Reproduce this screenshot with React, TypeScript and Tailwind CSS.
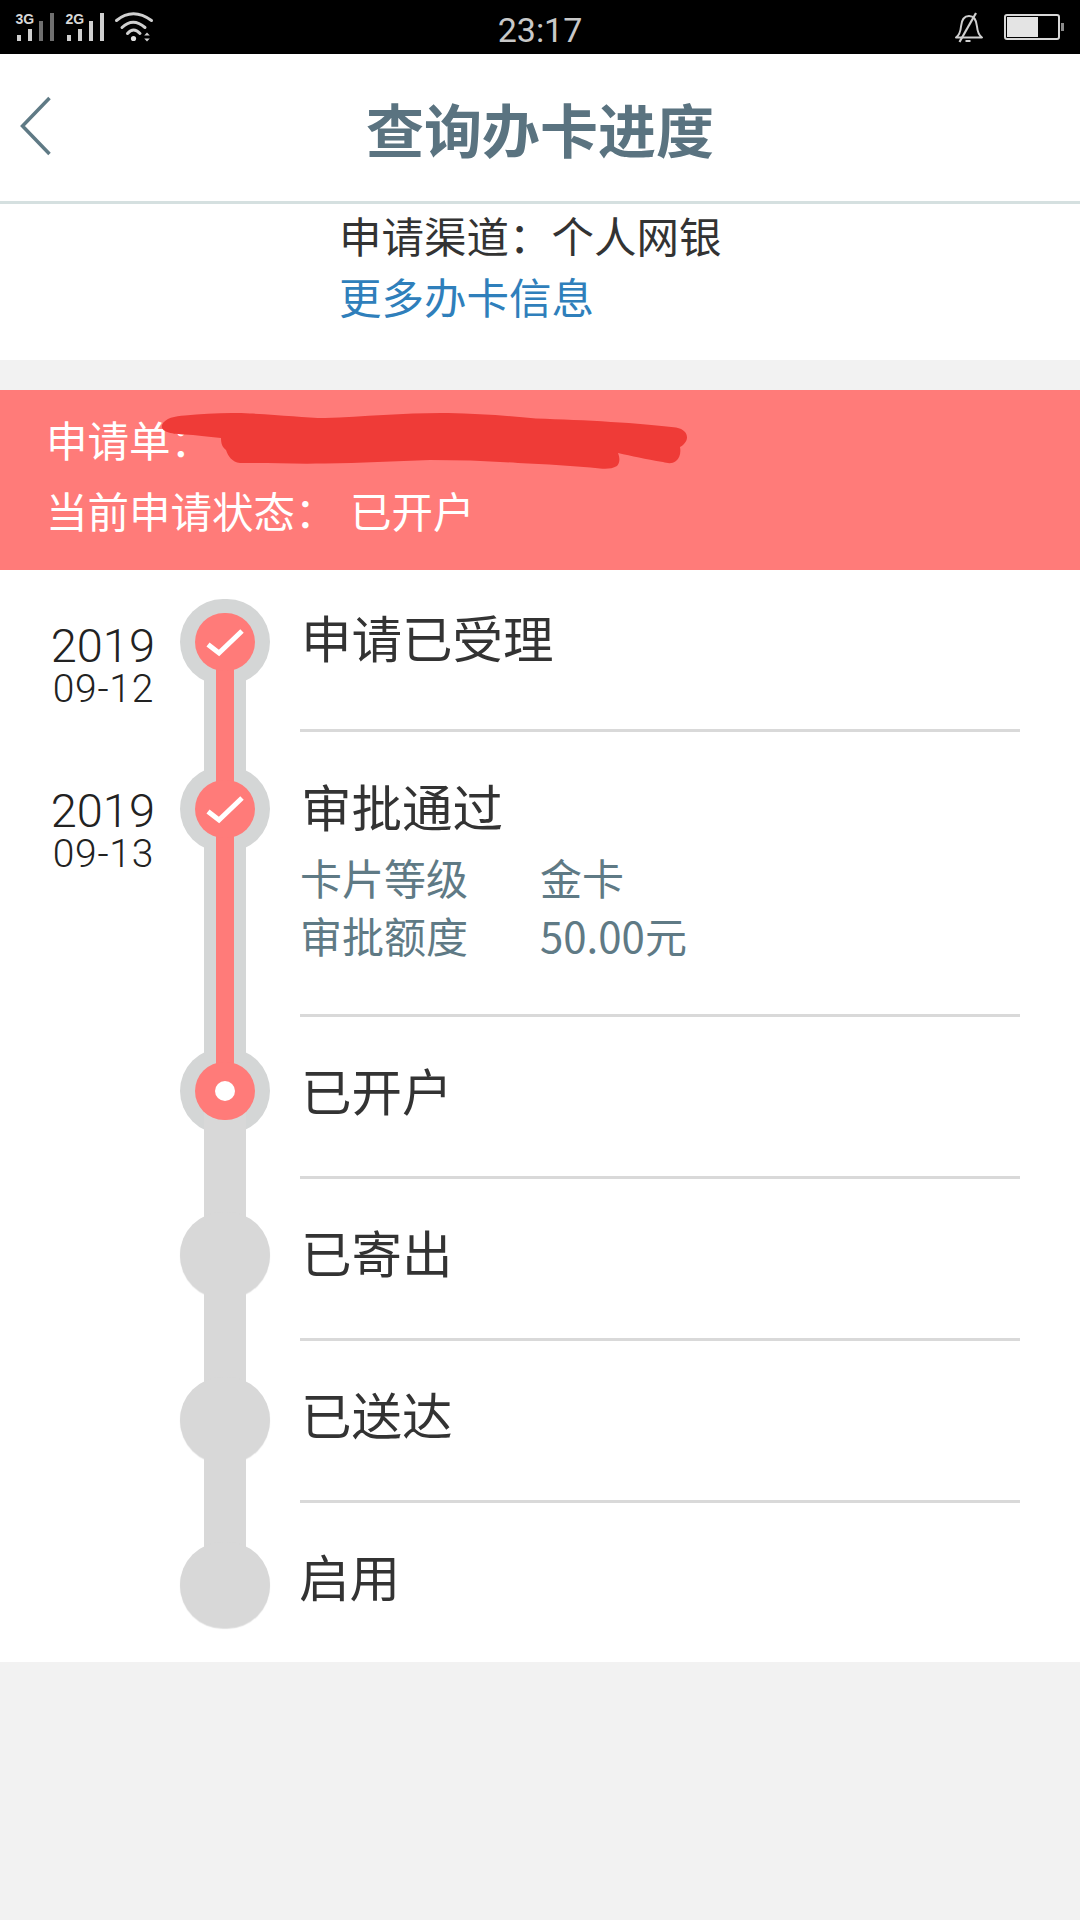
import React from "react";

const FONT = "font-['Noto_Sans_CJK_SC',sans-serif]";
const NUM = "font-['Roboto','Noto_Sans_CJK_SC',sans-serif]";

function StatusLeft() {
  const bar = "#cfcfcf";
  const dim = "#6f6f6f";
  return (
    <svg width="170" height="54" viewBox="0 0 170 54" fill="none">
      <text x="15.500" y="23.500" fontSize="14" fontWeight="700" fill="#d8d8d8" fontFamily="Liberation Sans">3G</text>
      <rect x="17" y="35" width="4" height="6" fill={bar} />
      <rect x="28" y="29" width="4" height="12" fill={bar} />
      <rect x="39" y="21" width="4" height="20" fill={dim} />
      <rect x="50" y="13" width="4" height="28" fill={dim} />
      <text x="65.500" y="23.500" fontSize="14" fontWeight="700" fill="#d8d8d8" fontFamily="Liberation Sans">2G</text>
      <rect x="67" y="35" width="4" height="6" fill={bar} />
      <rect x="78" y="29" width="4" height="12" fill={bar} />
      <rect x="89" y="21" width="4" height="20" fill={bar} />
      <rect x="100" y="13" width="4" height="28" fill={bar} />
      <g stroke="#d0d0d0" strokeWidth="3" strokeLinecap="round">
        <path d="M116.500 20.500Q133 7 151.500 20.500" />
        <path d="M122 27.500Q133 17 145 27.500" />
        <path d="M127.500 33.500Q133.500 26.500 140 33.500" />
      </g>
      <circle cx="133.500" cy="38.500" r="2.600" fill="#e0e0e0" />
      <path d="M147 32.500l2.800 3h-5.600zM147 41.500l2.800-3h-5.600z" fill="#d0d0d0" />
    </svg>
  );
}

function StatusRight() {
  return (
    <svg width="125" height="54" viewBox="955 0 125 54" fill="none">
      <path
        d="M956 37.500c3.500-2.500 4.500-5.500 5-11 .6-6.500 3.500-10.500 8-10.500s7.400 4 8 10.500c.5 5.500 1.500 8.500 5 11z"
        stroke="#d0d0d0"
        strokeWidth="2"
        strokeLinejoin="round"
      />
      <path d="M976 13L959.500 42" stroke="#d0d0d0" strokeWidth="2.200" />
      <rect x="965.500" y="40" width="5" height="2" fill="#d0d0d0" />
      <rect x="1005" y="15" width="54" height="24" rx="2" stroke="#d8d8d8" strokeWidth="2" />
      <rect x="1007" y="17" width="31" height="20" fill="#e4e4e4" />
      <rect x="1061" y="23" width="3" height="8" fill="#8a8a8a" />
    </svg>
  );
}

function Scribble() {
  return (
    <svg
      className="absolute left-[155px] top-[17px]"
      width="540"
      height="64"
      viewBox="155 407 540 64"
      fill="none"
    >
      <path
        d="M162 425C165 418 175 416 185 415.500C205 413.500 228 412.500 250 413.500C280 414.500 305 418 325 418C365 416.500 410 412.500 448 413C480 413.500 510 416 536 418.500C585 420 640 423 676 427.500C684 429 687 433 687 437.500C687 441 684 445 680 447C681 452 680 458 676 461C672 464 668 463.500 663 462C645 459 632 456 618 453C620 458 620 463 617 466C612 469 606 469 600 468.500C575 466 545 464 518 463C490 461 460 460 430 460C395 461 360 463 325 463.500C295 464 265 463 240 463C232 462 228 456 226 450C222 447 221 443 221 438C208 437 195 435 185 434.500C172 434 160 432 162 425Z"
        fill="#ef3b37"
      />
    </svg>
  );
}

function Check() {
  return (
    <svg width="60" height="58" viewBox="0 0 60 58" fill="none">
      <path d="M13 31.500L24 40L47 18" stroke="#ffffff" strokeWidth="5" />
    </svg>
  );
}

type Step = {
  label: string;
  state: "done" | "current" | "todo";
  rowClass: string;
  textPad: string;
  nodePad: string;
  track?: string;
  redTrack?: string;
  date?: [string, string];
  datePad?: string;
  border?: boolean;
  labelInset?: string;
  details?: [string, string][];
};

const steps: Step[] = [
  {
    label: "申请已受理",
    state: "done",
    rowClass: "h-[162px]",
    textPad: "pt-[36px]",
    nodePad: "pt-[29px]",
    track: "top-[72px] h-[167px] bg-[#d4d6d6]",
    redTrack: "top-[72px] h-[167px]",
    date: ["2019", "09-12"],
    datePad: "pt-[54px]",
    border: true,
  },
  {
    label: "审批通过",
    state: "done",
    rowClass: "h-[285px]",
    textPad: "pt-[43px]",
    nodePad: "pt-[34px]",
    track: "top-[77px] h-[282px] bg-[#d4d6d6]",
    redTrack: "top-[77px] h-[282px]",
    date: ["2019", "09-13"],
    datePad: "pt-[57px]",
    border: true,
    details: [
      ["卡片等级", "金卡"],
      ["审批额度", "50.00元"],
    ],
  },
  {
    label: "已开户",
    state: "current",
    rowClass: "h-[162px]",
    textPad: "pt-[42px]",
    nodePad: "pt-[31px]",
    track: "top-[74px] h-[164px] bg-[#d8d8d8]",
    border: true,
  },
  {
    label: "已寄出",
    state: "todo",
    rowClass: "h-[162px]",
    textPad: "pt-[42px]",
    nodePad: "pt-[33px]",
    track: "top-[76px] h-[165px] bg-[#d8d8d8]",
    border: true,
  },
  {
    label: "已送达",
    state: "todo",
    rowClass: "h-[162px]",
    textPad: "pt-[42px]",
    nodePad: "pt-[36px]",
    track: "top-[79px] h-[165px] bg-[#d8d8d8]",
    border: true,
  },
  {
    label: "启用",
    state: "todo",
    rowClass: "h-[159px]",
    textPad: "pt-[42px]",
    nodePad: "pt-[39px]",
    labelInset: "-ml-[2px]",
  },
];

function Row({ s }: { s: Step }) {
  const ring =
    s.state === "todo"
      ? "bg-[#d8d8d8] shadow-[0_1px_1px_rgba(0,0,0,0.12)]"
      : "bg-[#d4d6d6]";
  return (
    <div className={`flex ${s.rowClass}`}>
      <div className={`flex w-[155px] flex-col items-end ${s.datePad ?? ""} ${NUM} font-light text-[#222222]`}>
        {s.date && (
          <>
            <span className="text-[47px] leading-[44px]">{s.date[0]}</span>
            <span className="mt-[2px] pr-[1px] text-[39px] leading-[38px] tracking-[0.7px]">{s.date[1]}</span>
          </>
        )}
      </div>
      <div className={`relative ml-[25px] w-[90px] ${s.nodePad}`}>
        <div className={`relative flex h-[86px] w-[90px] items-center justify-center rounded-full ${ring}`}>
          {s.state !== "todo" && (
            <div className="relative z-20 flex h-[58px] w-[60px] items-center justify-center rounded-full bg-[#ff7b79]">
              {s.state === "done" ? <Check /> : <div className="h-[20px] w-[20px] rounded-full bg-white" />}
            </div>
          )}
        </div>
        {s.track && <div className={`absolute left-[24px] w-[42px] ${s.track}`} />}
        {s.redTrack && <div className={`absolute left-[36px] z-10 w-[18px] bg-[#ff7b79] ${s.redTrack}`} />}
      </div>
      <div className={`ml-[30px] w-[720px] ${s.textPad} ${s.border ? "border-b-[3px] border-[#d9d9d9]" : ""}`}>
        <div className={`pl-[1px] text-[50.5px] leading-[60px] text-[#333333] ${s.labelInset ?? ""}`}>{s.label}</div>
        {s.details && (
          <div className="mt-[13px] grid grid-cols-[240px_1fr] text-[42px] leading-[58px] text-[#5f7a85]">
            {s.details.map(([k, v]) => (
              <React.Fragment key={k}>
                <span>{k}</span>
                <span>{v}</span>
              </React.Fragment>
            ))}
          </div>
        )}
      </div>
    </div>
  );
}

export default function App() {
  return (
    <div className={`flex min-h-[1920px] w-[1080px] flex-col bg-[#f2f2f2] ${FONT}`}>
      <div className="flex h-[54px] items-center justify-between bg-black">
        <div className="flex flex-1 justify-start">
          <StatusLeft />
        </div>
        <span className="pt-[6px] font-['Roboto',sans-serif] text-[34px] leading-[48px] text-[#c8c8c8]">23:17</span>
        <div className="flex flex-1 justify-end">
          <StatusRight />
        </div>
      </div>

      <div className="relative flex h-[150px] items-center justify-center border-b-[3px] border-[#d5e0e0] bg-white">
        <svg className="absolute left-[19px] top-[42px]" width="34" height="60" viewBox="0 0 34 60" fill="none">
          <path d="M30.500 2L3.500 30L30.500 58" stroke="#5f7a85" strokeWidth="3.500" />
        </svg>
        <h1 className="text-[58px] font-bold leading-[70px] text-[#5a7380]">查询办卡进度</h1>
      </div>

      <div className="h-[156px] bg-white pl-[339px] text-[42.500px] leading-[61px]">
        <div className="text-[#333333]">申请渠道：个人网银</div>
        <div className="text-[#2f7fbb]">更多办卡信息</div>
      </div>

      <div className="relative mt-[30px] h-[180px] bg-[#ff7b79] pl-[46px] pt-[19px] text-[41.500px] leading-[60px] text-white">
        <div>申请单：</div>
        <div className="mt-[11px] flex">
          <span className="w-[304px]">当前申请状态：</span>
          <span>已开户</span>
        </div>
        <Scribble />
      </div>

      <div className="flex flex-col bg-white">
        {steps.map((s) => (
          <Row key={s.label} s={s} />
        ))}
      </div>
    </div>
  );
}
